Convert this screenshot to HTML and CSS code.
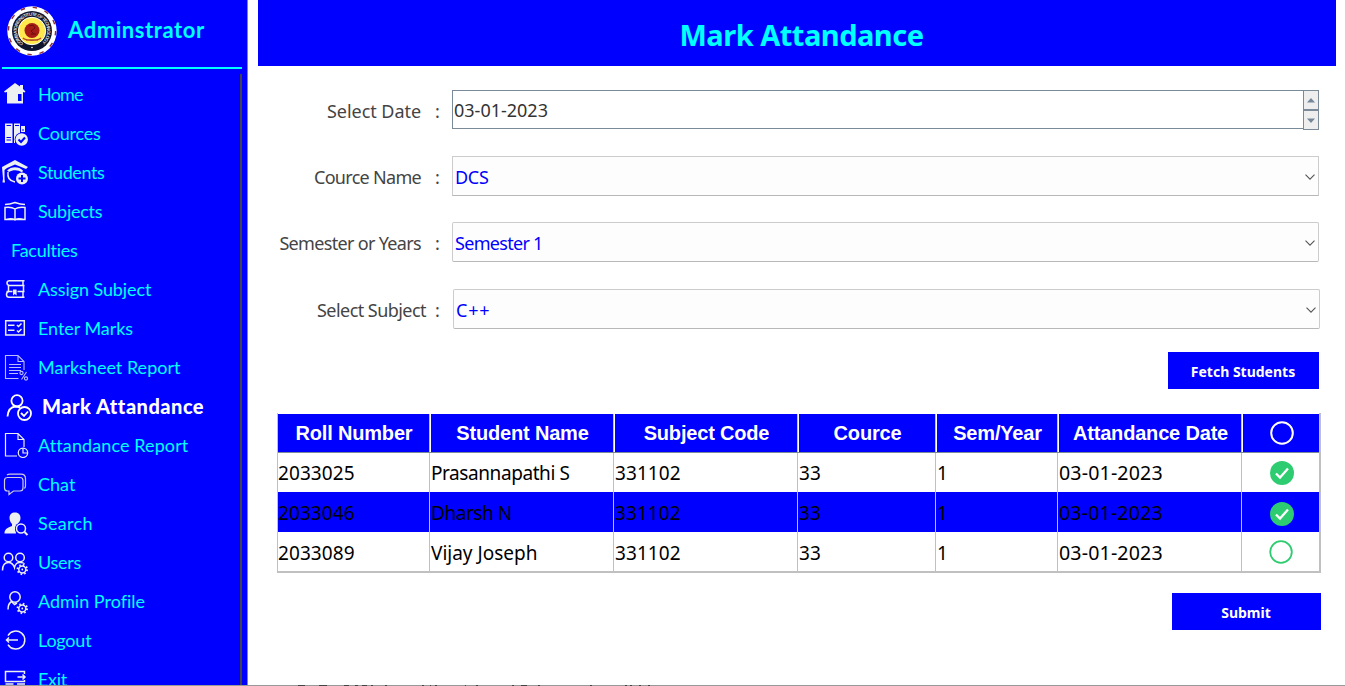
FILE: index.html
```html
<!DOCTYPE html>
<html lang="en">
<head>
<meta charset="utf-8">
<title>Mark Attandance</title>
<link rel="stylesheet" href="styles.css">
</head>
<body>
<div class="app">
  <aside class="sidebar">
    <div class="brand">
      <svg class="logo" viewBox="0 0 50 50">
        <circle cx="25" cy="25" r="24.700" fill="#fff"/>
        <circle cx="25" cy="25" r="23.600" fill="none" stroke="#8e2a35" stroke-width="1.400" stroke-dasharray="4.500 7.857"/>
        <circle cx="25" cy="25" r="20" fill="#10152f"/>
        <path id="ring" d="M16.400 37.500a15.200 15.200 0 1 1 17.200 0" fill="none"/>
        <text class="seal"><textPath href="#ring" textLength="75">COIMBATORE INSTITUTE OF TECHNOLOGY</textPath></text>
        <circle cx="25" cy="25" r="13.700" fill="#ffe94d" stroke="#fff" stroke-width="1"/>
        <circle cx="25" cy="24.500" r="7.500" fill="#a51c17"/>
        <path d="M22 20l4-1 2 3-4 3 3 3M24 28h5" fill="none" stroke="#6b0d10" stroke-width="1"/>
        <path d="M16 32c3 3 15 3 18 0M19 34h12" fill="none" stroke="#b64b2b" stroke-width="1.600"/>
        <circle cx="25" cy="41.500" r=".8" fill="#fff"/>
      </svg>
      <span class="brand-name">Adminstrator</span>
    </div>
    <nav class="menu">
      <a class="item"><svg class="icon" viewBox="0 0 34 39"><path class="solid" d="M4 16.500L15 8l5 3.500V10h3v4l2.500 2.500-1 1-1.500-.500v11.500H7V17l-2 .500z"/><path class="cut" d="M18 19h3.500v7H18z"/></svg><span class="w-home">Home</span></a>
      <a class="item"><svg class="icon" viewBox="0 0 34 39"><path class="solid" d="M5 9.500h7.500V29H5zM14 9.500h6V19l-4 3-1 7h-1zM21 12h4v6h-4z"/><path class="cutline" d="M6.500 11.500h4.500M6.500 23.500h4.500M6.500 26h4.500M15 11.500h4M15 23.500h2M22 16h2"/><circle class="cut" cx="21.700" cy="25.500" r="7"/><circle class="solid" cx="21.700" cy="25.500" r="6.200"/><path class="cutline bold" d="M18.500 25.500l2.500 2.500 4-4.500"/></svg><span class="w-cources">Cources</span></a>
      <a class="item"><svg class="icon" viewBox="0 0 34 39"><path class="solid" d="M2 14L15 7l13 7-2 2-11-4.500-8 3.500-2.500 2V26l.5 3.500H2.500l.500-4z"/><path class="solid" d="M7 17.500c4-4.500 12-4.500 16 0l-1 2c-4-3-9-3-13-.5z"/><path class="line" d="M8 19c-1 6 2 9 7 10"/><circle class="solid" cx="22" cy="25.500" r="6"/><path class="cutline bold" d="M22 22v7M18.500 25.500h7"/></svg><span class="w-students">Students</span></a>
      <a class="item"><svg class="icon" viewBox="0 0 34 39"><path class="line" d="M5 12.500c4 0 6-.500 10-2 4 1.500 6 2 10 2M15 17c-3-2-6-2-10-1.500V27.500h20V15.500c-4-.5-7-.5-10 1.500zM15 17v11.500M6 27.500c4-1 7-1 9 .500 2-1.500 5-1.500 9-.500"/></svg><span class="w-subjects">Subjects</span></a>
      <a class="item item-plain"><span class="w-faculties">Faculties</span></a>
      <a class="item"><svg class="icon" viewBox="0 0 34 39"><path class="line" d="M24.500 10.800H9.500q-2.500 0-2.500 2.200t2.500 2.500h15M23 10.800v5M8.500 15.500v5.500M6.500 21.500h6M17.500 21.500h7M23.500 16v5.500M24.500 27.300H9q-2.500 0-2.500-2.800T9 21.500M23 21.500v6"/><path class="solid" d="M13 19.500h3.600v6l-1.800-1.500-1.800 1.500z"/></svg><span class="w-assign">Assign Subject</span></a>
      <a class="item"><svg class="icon" viewBox="0 0 34 39"><path class="line" d="M5.700 11.700h18.600v14.300H5.700zM8 16.300h6.500M8 21.300h6.500M17 16l1.500 1.500 3-3M17 21.500l1.500 1.500 3-3"/></svg><span class="w-enter">Enter Marks</span></a>
      <a class="item"><svg class="icon" viewBox="0 0 34 39"><path class="line thin" d="M18.500 30.500h-13v-23H18l6 6V22M18 7.500v6h6M9 16.500h12M9 19.500h12M9 22.500h12M9 25.500h9M26.500 24l-5 7.500"/><circle class="line thin" cx="21.500" cy="25" r="1.600"/><circle class="line thin" cx="26" cy="30.500" r="1.600"/></svg><span class="w-sheet">Marksheet Report</span></a>
      <a class="item item-active"><svg class="icon" viewBox="0 0 34 39"><circle class="line active" cx="17" cy="13.800" r="5.600"/><path class="line active" d="M7.500 29.500c.5-6 3-9.500 8-10 2 0 3 .3 4.500 1.300"/><circle class="line active" cx="24.500" cy="26.500" r="6.500"/><path class="line active" d="M21 26l3 3 4-4.500"/></svg><span class="w-mark">Mark Attandance</span></a>
      <a class="item"><svg class="icon" viewBox="0 0 34 39"><path class="line slim" d="M17 30H5.500V7.500H18l6 6V21M18 7.500v6h6M23 22.500v4.500h4"/><circle class="line slim" cx="23" cy="26.800" r="4.700"/></svg><span class="w-areport">Attandance Report</span></a>
      <a class="item"><svg class="icon" viewBox="0 0 34 39"><path class="line slim soft" d="M7 12.500h13q3 0 3 3v7.500q0 3-3 3h-6.500L9 29.500V26H7.500q-3 0-3-3v-7.500q0-3 3-3zM7 10q1-.8 3-.8h11q4.500 0 4.500 4.500v7q0 1.800-1 2.800"/></svg><span class="w-chat">Chat</span></a>
      <a class="item"><svg class="icon" viewBox="0 0 34 39"><path class="solid" d="M15 8.500c4 0 5.500 2.500 5.500 5.500 0 2-1 4-2.500 5.500v1l-3 3.500 1 5.500H4.500c0-4 2-5.500 7.500-7.500v-2c-1.500-1.500-2.500-4-2.500-6 0-3.500 2-5.500 5.500-5.500z"/><circle class="cut" cx="21" cy="24.500" r="6"/><circle class="line" cx="21" cy="24.500" r="4.500"/><path class="line bold" d="M24.500 28l3 3"/></svg><span class="w-search">Search</span></a>
      <a class="item"><svg class="icon" viewBox="0 0 34 39"><circle class="line" cx="8.500" cy="14.500" r="4.300"/><circle class="line" cx="20" cy="14.500" r="4.300"/><path class="line" d="M2.500 27.500c0-5 2-8 6-8s5 2.500 6 5c.5-3.500 3-5.500 6-5 2 .2 3 .6 4 1.500"/><circle class="cut" cx="22.300" cy="26.500" r="6"/><circle class="line" cx="22.300" cy="26.500" r="3.500"/><circle class="teeth" cx="22.300" cy="26.500" r="4.700"/><circle class="solid" cx="22.300" cy="26.500" r=".9"/></svg><span class="w-users">Users</span></a>
      <a class="item"><svg class="icon" viewBox="0 0 34 39"><circle class="line" cx="15" cy="15" r="5.200"/><path class="line" d="M8 27.500c0-4 1-6.500 3.500-8l3 3 2.500-1.500"/><circle class="line" cx="22.300" cy="26.500" r="3.500"/><circle class="teeth" cx="22.300" cy="26.500" r="4.700"/><circle class="solid" cx="22.300" cy="26.500" r=".9"/></svg><span class="w-admin">Admin Profile</span></a>
      <a class="item"><svg class="icon" viewBox="0 0 34 39"><path class="line" d="M8 14.500a9 9 0 1 1 0 9M18 19H6.500M9 16.500L6.500 19 9 21.500"/></svg><span class="w-logout">Logout</span></a>
      <a class="item"><svg class="icon" viewBox="0 0 34 39"><path class="line" d="M24.500 14v-2.500h-19v10h19V20M5.500 24h8M17 24h8M17.500 17h7.500M22.500 14.500L25 17l-2.500 2.500"/></svg><span class="w-exit">Exit</span></a>
    </nav>
  </aside>

  <main class="content">
    <h1 class="title"><span>Mark Attandance</span></h1>
    <form class="form">
      <div class="row">
        <label class="label"><span class="l-date">Select Date</span></label><span class="colon">:</span>
        <div class="date"><span class="date-value">03-01-2023</span>
          <div class="spinner">
            <span class="spin"><svg viewBox="0 0 8 5"><path d="M4 0l4 4.500H0z" fill="#74879a"/></svg></span>
            <span class="spin"><svg viewBox="0 0 8 5"><path d="M0 .5h8L4 5z" fill="#74879a"/></svg></span>
          </div>
        </div>
      </div>
      <div class="row">
        <label class="label"><span class="l-cource">Cource Name</span></label><span class="colon">:</span>
        <div class="select select-blue"><span class="v-dcs">DCS</span><svg class="chevron" viewBox="0 0 10 6"><path d="M.5.700L5 5.200 9.500.700"/></svg></div>
      </div>
      <div class="row">
        <label class="label"><span class="l-sem">Semester or Years</span></label><span class="colon">:</span>
        <div class="select"><span class="v-sem">Semester 1</span><svg class="chevron" viewBox="0 0 10 6"><path d="M.5.700L5 5.200 9.500.700"/></svg></div>
      </div>
      <div class="row row-subject">
        <label class="label label-wide"><span class="l-subject">Select Subject</span></label><span class="colon">:</span>
        <div class="select"><span class="v-sub">C++</span><svg class="chevron" viewBox="0 0 10 6"><path d="M.5.700L5 5.200 9.500.700"/></svg></div>
      </div>
    </form>
    <button class="button fetch"><span>Fetch Students</span></button>
    <div class="table">
      <div class="tr head">
        <div class="th"><span>Roll Number</span></div><div class="th"><span>Student Name</span></div><div class="th"><span>Subject Code</span></div><div class="th"><span>Cource</span></div><div class="th"><span>Sem/Year</span></div><div class="th"><span>Attandance Date</span></div>
        <div class="th"><svg class="mark" viewBox="0 0 24 24"><circle cx="12" cy="12" r="10.800" fill="none" stroke="#fff" stroke-width="2"/></svg></div>
      </div>
      <div class="tr">
        <div class="td">2033025</div><div class="td"><span class="n-one">Prasannapathi S</span></div><div class="td">331102</div><div class="td">33</div><div class="td">1</div><div class="td date-cell">03-01-2023</div>
        <div class="td check check-first"><svg class="mark" viewBox="0 0 24 24"><circle cx="12" cy="12" r="12" fill="#2ecc71"/><path d="M6 12.500l4 4 8-9" fill="none" stroke="#fff" stroke-width="2.300"/></svg></div>
      </div>
      <div class="tr selected">
        <div class="td">2033046</div><div class="td"><span class="n-two">Dharsh N</span></div><div class="td">331102</div><div class="td">33</div><div class="td">1</div><div class="td date-cell">03-01-2023</div>
        <div class="td check"><svg class="mark" viewBox="0 0 24 24"><circle cx="12" cy="12" r="12" fill="#2ecc71"/><path d="M6 12.500l4 4 8-9" fill="none" stroke="#fff" stroke-width="2.300"/></svg></div>
      </div>
      <div class="tr">
        <div class="td">2033089</div><div class="td"><span class="n-three">Vijay Joseph</span></div><div class="td">331102</div><div class="td">33</div><div class="td">1</div><div class="td date-cell">03-01-2023</div>
        <div class="td check check-empty"><svg class="mark" viewBox="0 0 24 24"><circle cx="12" cy="12" r="10.800" fill="none" stroke="#2ecc71" stroke-width="1.800"/></svg></div>
      </div>
    </div>
    <button class="button submit"><span>Submit</span></button>
  </main>
</div>
<svg class="edge" viewBox="0 0 1345 2"><path d="M0 1.500h1345" stroke="#999" stroke-width="1"/><path d="M298 1.500h7m14 0h8m17 0h5m6 0h3m4 0h5m4 0h2m12 0h2m35 0h2m6 0h1m4 0h2m28 0h1m10 0h2m34 0h2m7 0h6m11 0h2m50 0h2m33 0h2m3 0h2m7 0h2m7 0h2" stroke="#444" stroke-width="1"/></svg>
</body>
</html>
```
FILE: styles.css
```css
* { box-sizing: border-box; }
body { margin: 0; width: 1345px; height: 686px; overflow: hidden; background: #fff; font-family: "Noto Sans", sans-serif; }
.app { display: flex; height: 686px; overflow: hidden; }

.sidebar { width: 248px; height: 686px; background: #00f; border-right: 1px solid #8585a0; flex: none; overflow: hidden; }
.brand { display: flex; width: 240px; height: 69px; margin-left: 2px; padding: 6px 0 0 5px; border-bottom: 2px solid #0ff; }
.logo { width: 50px; height: 50px; flex: none; }
.seal { font: bold 4.6px "Liberation Sans", sans-serif; fill: #ddd; }
.brand-name { margin-left: 11px; font: bold 22px/48px Lato, sans-serif; color: #0ff; letter-spacing: .58px; white-space: nowrap; }
.menu { width: 242px; height: 612px; margin-top: 5px; padding-top: 1px; border-right: 2px solid #444; overflow: hidden; }
.item { display: flex; height: 39px; color: #0ff; font: 18px/39px Lato, sans-serif; font-variant-ligatures: none; white-space: nowrap; }
.item span { margin-left: 4px; }
.item-plain span { margin-left: 11px; }
.item-active { color: #fff; font-weight: 900; font-size: 20px; }
.item-active span { margin-left: 8px; line-height: 38px; }
.w-home { letter-spacing: -.8px; }
.w-cources { letter-spacing: -.2px; }
.w-students { letter-spacing: -.4px; }
.w-subjects { letter-spacing: -.25px; }
.w-faculties { letter-spacing: -.25px; }
.w-assign { letter-spacing: -.1px; }
.w-enter { letter-spacing: -.05px; }
.w-mark { letter-spacing: .48px; }
.w-areport { letter-spacing: .1px; }
.w-search { letter-spacing: .3px; }
.w-users { letter-spacing: -.3px; }
.w-logout { letter-spacing: -.2px; }
.w-exit { letter-spacing: -.3px; }
.icon { width: 34px; height: 39px; flex: none; }
.solid { fill: #ecf0f1; }
.cut { fill: #00f; }
.line { fill: none; stroke: #ecf0f1; stroke-width: 1.5; }
.thin { stroke: #bbbcff; stroke-width: 1.1; }
.slim { stroke-width: 1.2; }
.soft { stroke: #ccd; }
.bold { stroke-width: 2; }
.active { stroke: #fff; stroke-width: 1.8; }
.cutline { fill: none; stroke: #00f; stroke-width: 1; }
.cutline.bold { stroke-width: 2; }
.teeth { fill: none; stroke: #ecf0f1; stroke-width: 2; stroke-dasharray: 1.5 2.19; }

.content { display: flex; flex-direction: column; width: 1078px; margin-left: 10px; }
.title { display: flex; justify-content: center; height: 66px; margin: 0; padding: 2px 0 0 9px; background: #00f; color: #0ff; font: bold 29px/66px "Noto Sans", sans-serif; letter-spacing: -.5px; }
.form { display: flex; flex-direction: column; gap: 26px; margin-top: 24px; }
.row { display: flex; height: 40px; font-size: 18px; line-height: 42px; color: #444; white-space: nowrap; }
.row-subject { width: 1062px; margin-top: 1px; }
.label { width: 163px; text-align: right; }
.label-wide { width: 168px; }
.l-date { letter-spacing: -.05px; }
.l-cource { letter-spacing: -.7px; }
.l-sem { letter-spacing: -.67px; }
.l-subject { letter-spacing: -.55px; }
.v-dcs { letter-spacing: -.3px; }
.v-sem { letter-spacing: -.7px; }
.v-sub { letter-spacing: .8px; }
.colon { width: 31px; padding-left: 14px; }
.label-wide + .colon { width: 27px; padding-left: 9px; }
.date { display: flex; justify-content: space-between; width: 867px; height: 39px; border: 1px solid #7a8a99; line-height: 38px; color: #333; }
.date-value { margin-left: 1px; }
.spinner { display: flex; flex-direction: column; width: 16px; height: 40px; margin: -1px -1px 0 0; }
.spin { display: flex; align-items: center; justify-content: center; height: 20px; background: #eee; border: 1px solid #7a8a99; }
.spin svg { width: 8px; height: 5px; }
.select { display: flex; justify-content: space-between; width: 867px; height: 40px; padding: 0 3px 0 2px; background: #fdfdfd; border: 1px solid #ccc; border-bottom-color: #b8b8b8; border-radius: 2px; color: #00f; line-height: 41px; }
.select-blue { border-radius: 0; }
.chevron { width: 10px; height: 6px; margin-top: 17px; fill: none; stroke: #555; stroke-width: 1.1; }

.button { border: 0; padding: 0; background: #00f; color: #fff; font: bold 14px/37px "Noto Sans", sans-serif; height: 37px; }
.fetch { width: 151px; margin: 23px 0 0 910px; padding: 1px 1px 0 0; }
.submit { width: 149px; margin: 20px 0 0 914px; padding: 1px 1px 0 0; }

.table { width: 1044px; height: 160px; margin: 24px 0 0 19px; border: solid #c0c0c0; border-width: 0 2px 2px 1px; }
.tr { display: grid; grid-template-columns: 152px 184px 184px 138px 122px 184px 77px; height: 40px; overflow: hidden; }
.head { height: 39px; background: #00f; border-bottom: 1px solid #7a8a99; margin-top: 1px; }
.th { display: flex; align-items: center; justify-content: center; padding-left: 2px; border-right: 1px solid #c0c0c0; box-shadow: inset 1px 0 #fff; color: #fff; font: bold 20px/38px "Liberation Sans", sans-serif; letter-spacing: -.18px; white-space: nowrap; }
.th:first-child { box-shadow: none; padding-left: 1px; }
.th:last-child, .td:last-child { border-right: 0; }
.td { border-right: 1px solid #c0c0c0; border-bottom: 1px solid #c0c0c0; font-size: 19px; line-height: 42px; letter-spacing: .08px; color: #000; padding-left: 1px; white-space: nowrap; }
.td:first-child { padding-left: 0; }
.head + .tr { height: 39px; }
.head + .tr .td { line-height: 41px; }
.tr:last-child .td { border-bottom: 0; }
.td.date-cell { font-size: 19.6px; letter-spacing: .15px; line-height: 41px; }
.head + .tr .date-cell { line-height: 39px; }
.n-one { letter-spacing: -.42px; }
.n-two { letter-spacing: -.45px; }
.n-three { letter-spacing: 0; }
.selected { background: #00f; }
.check { display: flex; justify-content: center; align-items: center; padding: 1px 0 0 2px; }
.check-first { padding-top: 0; padding-bottom: 1px; }
.check-empty { padding: 0 0 2px 0; }
.mark { width: 24px; height: 24px; }
.edge { position: absolute; left: 0; top: 684px; width: 1345px; height: 2px; }
```
